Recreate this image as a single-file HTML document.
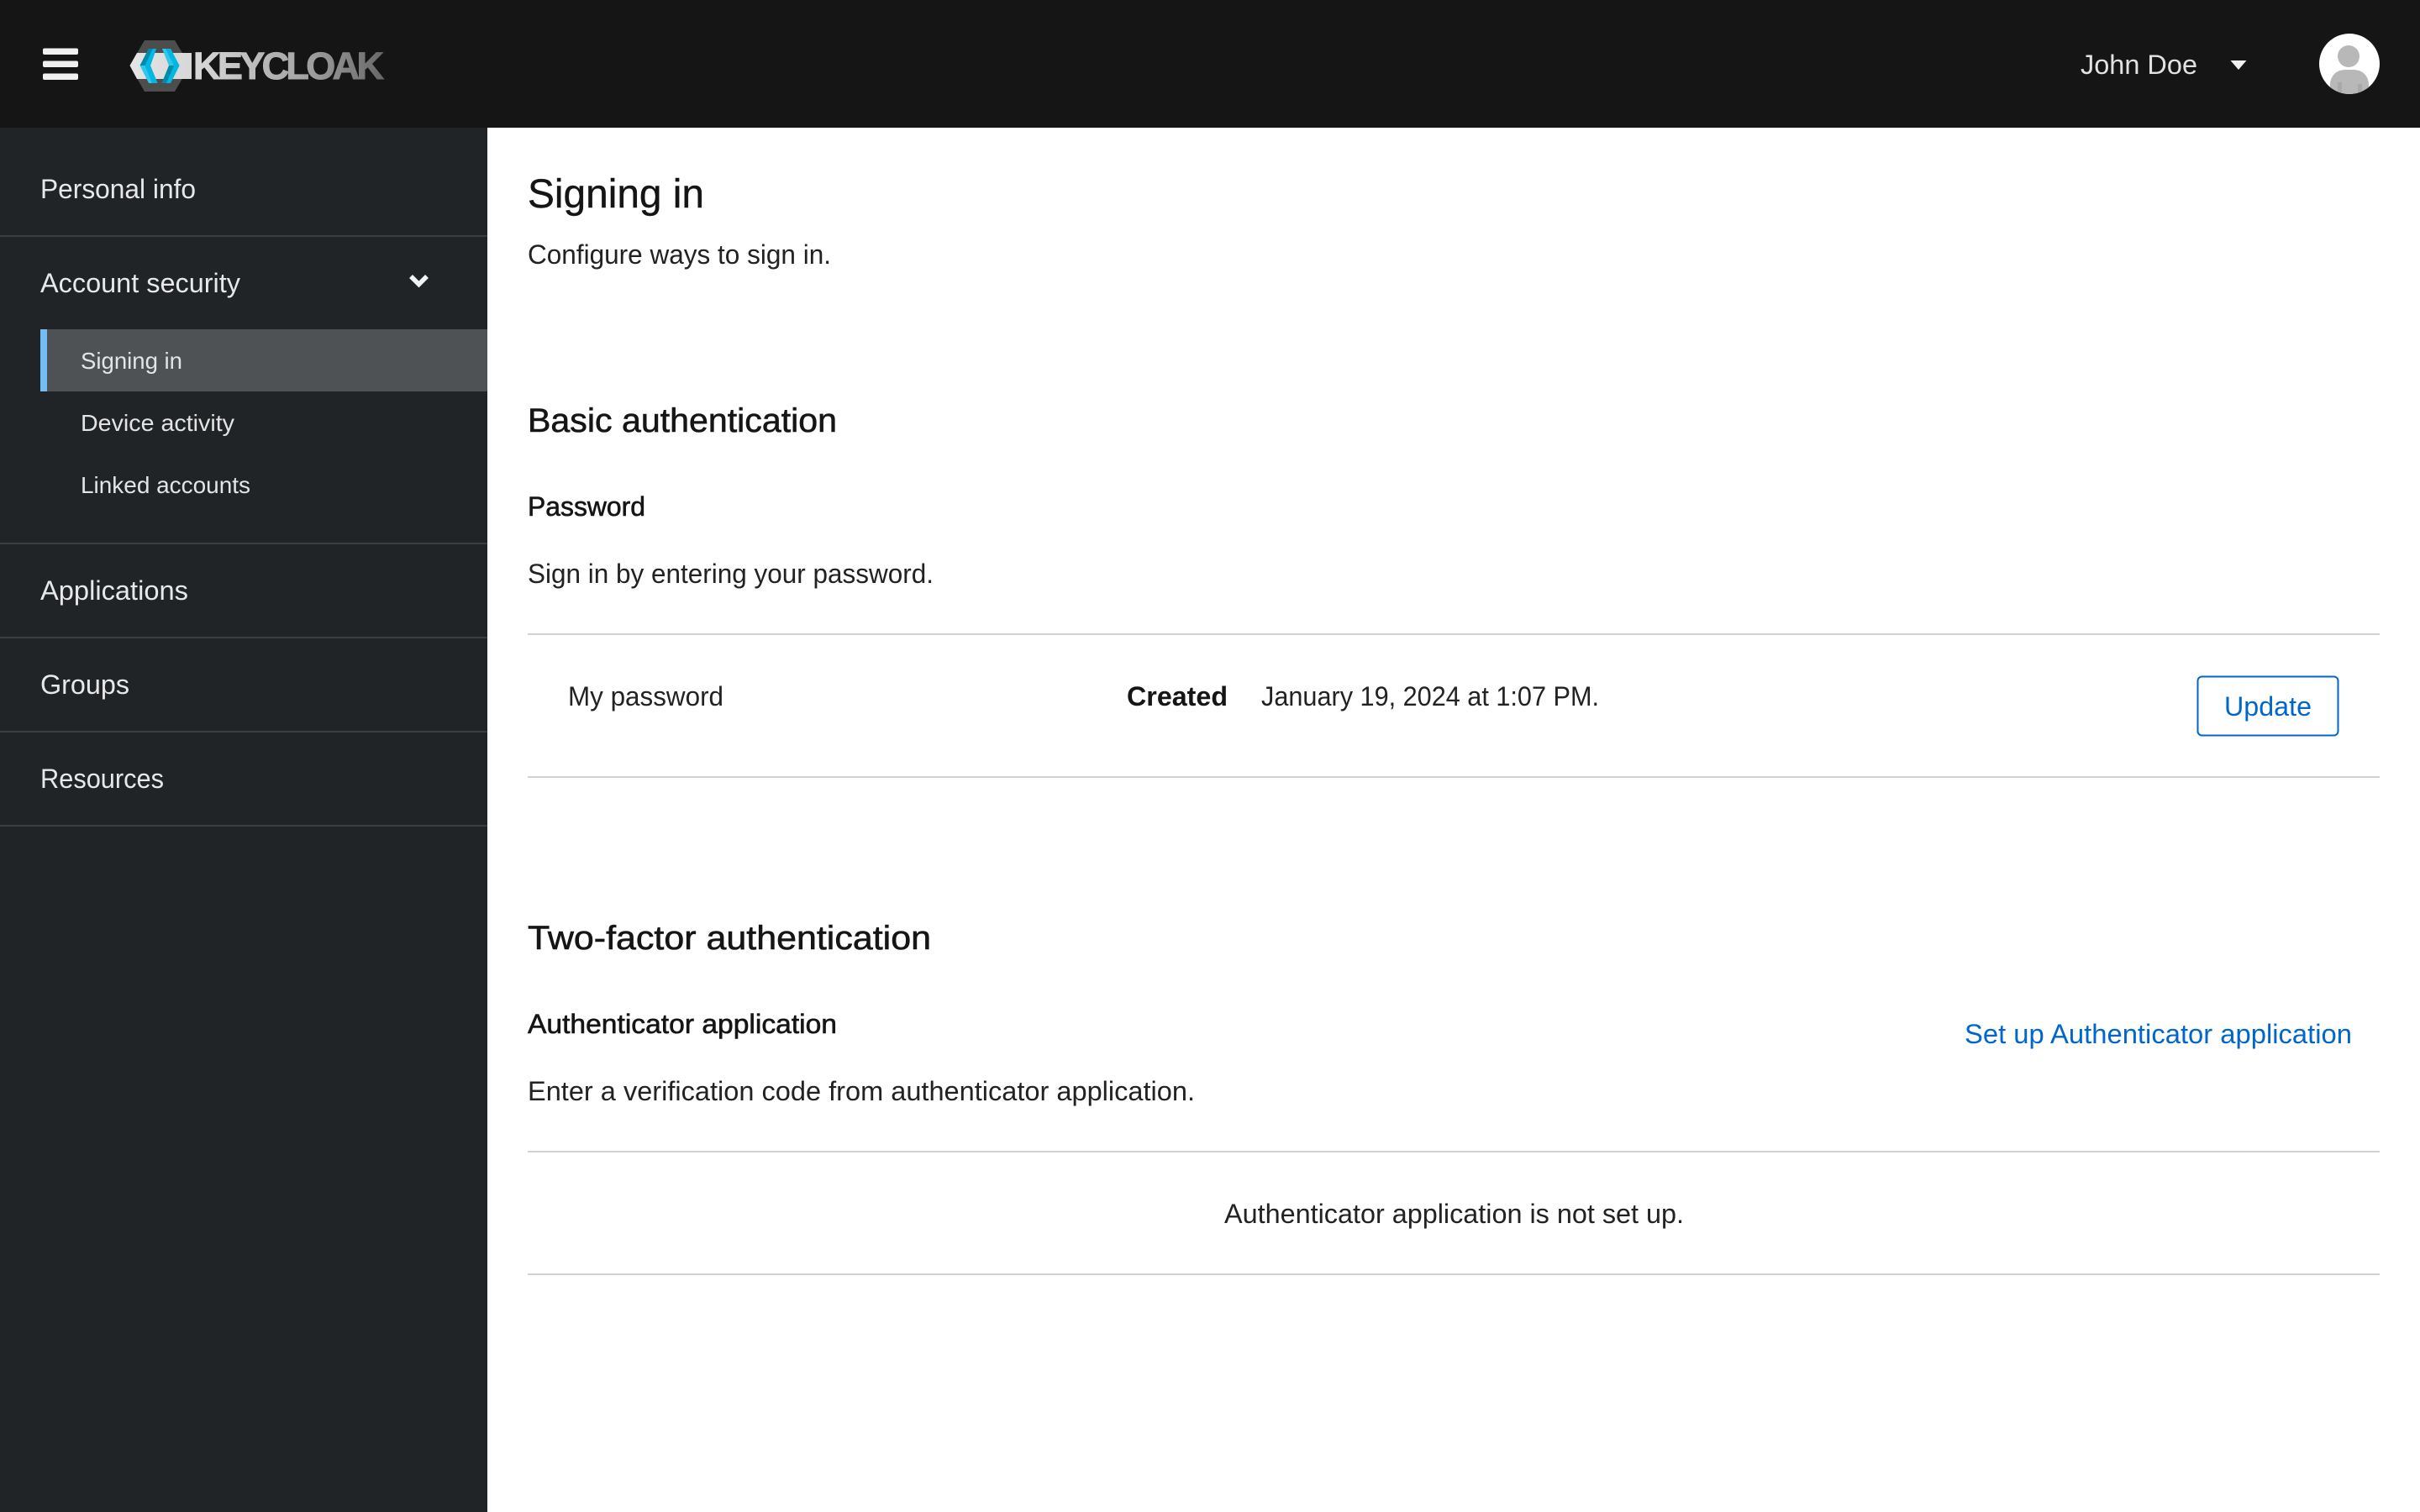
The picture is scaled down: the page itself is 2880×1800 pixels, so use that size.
<!DOCTYPE html>
<html lang="en">
<head>
<meta charset="utf-8">
<title>Signing in</title>
<style>
html,body{margin:0;padding:0;background:#fff;width:2880px;height:1800px;overflow:hidden}
svg{display:block}
text{font-family:"Liberation Sans",sans-serif;white-space:pre}
.nav{font-size:32px;fill:#e8e8e8}
.sub{font-size:28px;fill:#e4e4e4}
.body{font-size:32px;fill:#222}
.med{fill:#151515;stroke:#151515;stroke-width:.6px}
</style>
</head>
<body>
<svg width="2880" height="1800" viewBox="0 0 2880 1800" xmlns="http://www.w3.org/2000/svg">
<defs>
<linearGradient id="kc" gradientUnits="userSpaceOnUse" x1="150" y1="0" x2="460" y2="0">
<stop offset="0" stop-color="#e6e6e6"/><stop offset=".3" stop-color="#d4d4d4"/><stop offset=".68" stop-color="#a4a4a4"/><stop offset="1" stop-color="#666"/>
</linearGradient>
<clipPath id="av"><circle cx="2796" cy="76" r="36"/></clipPath>
</defs>
<rect width="2880" height="1800" fill="#fff"/>
<rect width="2880" height="152" fill="#151515"/>
<rect y="152" width="580" height="1648" fill="#212427"/>

<!-- hamburger -->
<rect x="51" y="57.500" width="42" height="7.500" rx="2" fill="#f0f0f0"/>
<rect x="51" y="72.500" width="42" height="7.500" rx="2" fill="#f0f0f0"/>
<rect x="51" y="87.500" width="42" height="7.500" rx="2" fill="#f0f0f0"/>

<!-- logo -->
<polygon points="172,48 208,48 226,78 208,109 172,109 154.500,78" fill="#4d4d4d"/>
<polygon points="163,63 228,63 228,94 163,94 154.500,78" fill="url(#kc)"/>
<polygon points="176.700,58 186,58 179,78 166.500,78" fill="#008aaa"/>
<polygon points="182,58 186,58 179,78 172.500,78" fill="#00b8e3"/>
<polygon points="166.500,78 179,78 187.500,99 177,99" fill="#33c6e9"/>
<polygon points="172.500,78 179,78 187.500,99 181,99" fill="#00b8e3"/>
<polygon points="193,58 203,58 213.500,78 201,78" fill="#33c6e9"/>
<polygon points="197,58 203,58 213.500,78 207,78" fill="#00b8e3"/>
<polygon points="201,78 213.500,78 203,99 192.500,99" fill="#008aaa"/>
<polygon points="207,78 213.500,78 203,99 198,99" fill="#00b8e3"/>
<text x="230" y="94" font-size="45" font-weight="700" fill="url(#kc)" stroke="url(#kc)" stroke-width="1" textLength="227" lengthAdjust="spacing">KEYCLOAK</text>

<!-- user -->
<text x="2476" y="88" font-size="32" fill="#e2e2e2" textLength="139" lengthAdjust="spacingAndGlyphs">John Doe</text>
<polygon points="2654.500,72 2673.500,72 2664,83" fill="#f0f0f0"/>
<circle cx="2796" cy="76" r="36" fill="#fff"/>
<g clip-path="url(#av)">
<circle cx="2795" cy="67" r="13" fill="#b8b8b8"/>
<path d="M2795 54a13 13 0 0 0 0 26a13 13 0 0 1 0-26z" fill="#a9a9a9"/>
<path d="M2773 112v-11c0-11 8-18 18-18h10c10 0 18 7 18 18v11z" fill="#b8b8b8"/>
<rect x="2782" y="98" width="5" height="16" fill="#a9a9a9"/>
<rect x="2806" y="100" width="5" height="14" fill="#a9a9a9"/>
</g>

<!-- sidebar -->
<text class="nav" x="48" y="236" textLength="185" lengthAdjust="spacingAndGlyphs">Personal info</text>
<rect y="280" width="580" height="2" fill="#3c3f42"/>
<text class="nav" x="48" y="348" textLength="238" lengthAdjust="spacingAndGlyphs">Account security</text>
<path d="M489 329l9.500 9.500 9.500-9.500" fill="none" stroke="#f4f4f4" stroke-width="5.500"/>
<rect x="48" y="392" width="532" height="74" fill="#4f5255"/>
<rect x="48" y="392" width="8" height="74" fill="#73bcf7"/>
<text class="sub" x="96" y="439" textLength="121" lengthAdjust="spacingAndGlyphs">Signing in</text>
<text class="sub" x="96" y="513" textLength="183" lengthAdjust="spacingAndGlyphs">Device activity</text>
<text class="sub" x="96" y="587" textLength="202" lengthAdjust="spacingAndGlyphs">Linked accounts</text>
<rect y="646" width="580" height="2" fill="#3c3f42"/>
<text class="nav" x="48" y="714" textLength="176" lengthAdjust="spacingAndGlyphs">Applications</text>
<rect y="758" width="580" height="2" fill="#3c3f42"/>
<text class="nav" x="48" y="826" textLength="106" lengthAdjust="spacingAndGlyphs">Groups</text>
<rect y="870" width="580" height="2" fill="#3c3f42"/>
<text class="nav" x="48" y="938" textLength="147" lengthAdjust="spacingAndGlyphs">Resources</text>
<rect y="982" width="580" height="2" fill="#3c3f42"/>

<!-- main -->
<text x="628" y="247" font-size="48" fill="#151515" stroke="#151515" stroke-width=".4" textLength="210" lengthAdjust="spacingAndGlyphs">Signing in</text>
<text class="body" x="628" y="314" textLength="361" lengthAdjust="spacingAndGlyphs">Configure ways to sign in.</text>
<text class="med" x="628" y="514" font-size="40" textLength="368" lengthAdjust="spacingAndGlyphs">Basic authentication</text>
<text class="med" x="628" y="614" font-size="32" textLength="140" lengthAdjust="spacingAndGlyphs">Password</text>
<text class="body" x="628" y="694" textLength="483" lengthAdjust="spacingAndGlyphs">Sign in by entering your password.</text>
<rect x="628" y="754" width="2204" height="2" fill="#d2d2d2"/>
<text class="body" x="676" y="840" textLength="185" lengthAdjust="spacingAndGlyphs">My password</text>
<text x="1341" y="840" font-size="32" font-weight="700" fill="#151515" textLength="120" lengthAdjust="spacingAndGlyphs">Created</text>
<text class="body" x="1501" y="840" textLength="402" lengthAdjust="spacingAndGlyphs">January 19, 2024 at 1:07 PM.</text>
<rect x="2615.500" y="805.500" width="167" height="70" rx="5" fill="#fff" stroke="#06c" stroke-width="2"/>
<text x="2647" y="852" font-size="32" fill="#06c" textLength="104" lengthAdjust="spacingAndGlyphs">Update</text>
<rect x="628" y="924" width="2204" height="2" fill="#d2d2d2"/>
<text class="med" x="628" y="1130" font-size="40" textLength="480" lengthAdjust="spacingAndGlyphs">Two-factor authentication</text>
<text class="med" x="628" y="1230" font-size="32" textLength="368" lengthAdjust="spacingAndGlyphs">Authenticator application</text>
<text x="2338" y="1242" font-size="32" fill="#06c" textLength="461" lengthAdjust="spacingAndGlyphs">Set up Authenticator application</text>
<text class="body" x="628" y="1310" textLength="794" lengthAdjust="spacingAndGlyphs">Enter a verification code from authenticator application.</text>
<rect x="628" y="1370" width="2204" height="2" fill="#d2d2d2"/>
<text class="body" x="1457" y="1456" textLength="547" lengthAdjust="spacingAndGlyphs">Authenticator application is not set up.</text>
<rect x="628" y="1516" width="2204" height="2" fill="#d2d2d2"/>
</svg>
</body>
</html>
